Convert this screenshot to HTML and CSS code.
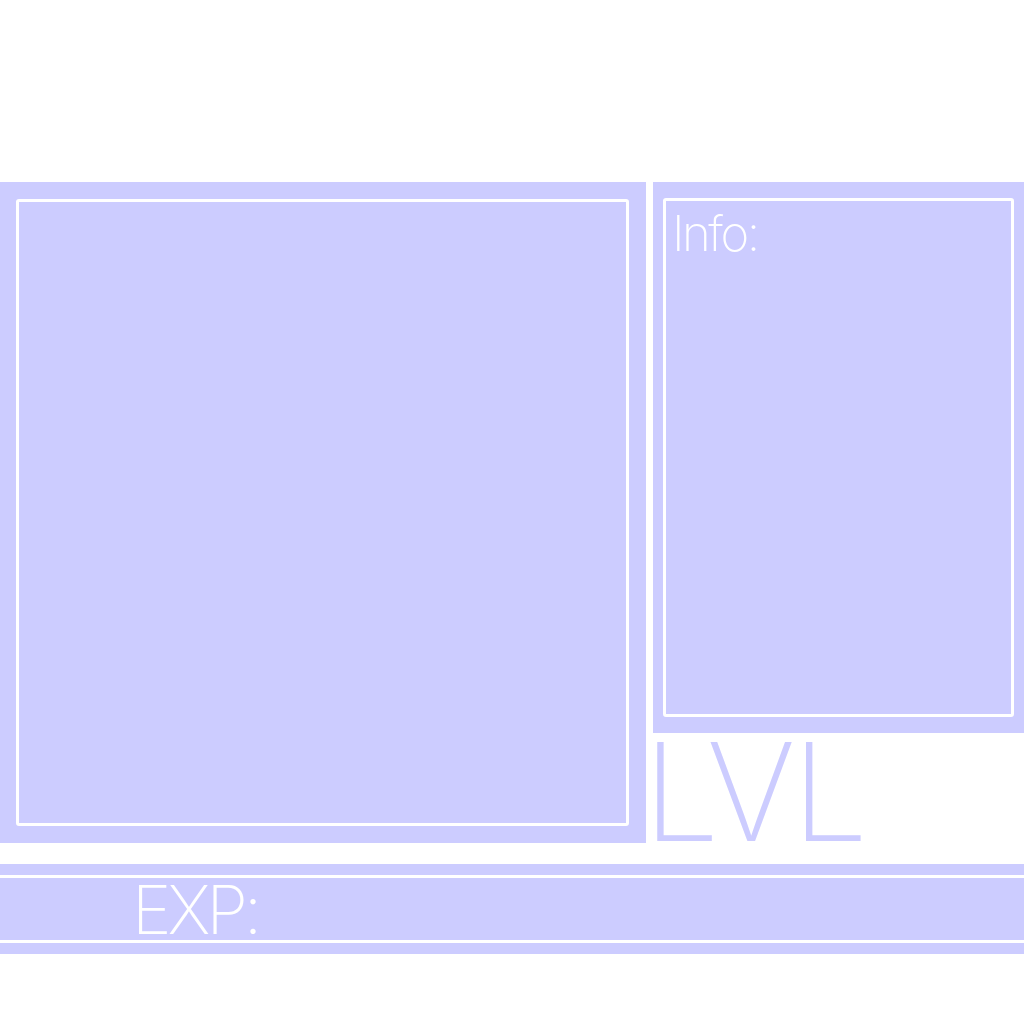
FILE: index.html
```html
<!DOCTYPE html>
<html>
<head>
<meta charset="utf-8">
<link rel="stylesheet" href="styles.css">
</head>
<body>
<div class="page">
  <div class="main-row">
    <section class="panel panel-left">
      <div class="frame frame-left"></div>
    </section>
    <div class="side">
      <section class="panel panel-right">
        <div class="frame frame-right">
          <div class="info-label">Info:</div>
        </div>
      </section>
      <div class="lvl">LVL</div>
    </div>
  </div>
  <section class="exp-bar">
    <div class="exp-inner">
      <span class="exp-label">EXP:</span>
    </div>
  </section>
</div>
</body>
</html>
```
FILE: styles.css
```css
html, body {
  margin: 0;
  padding: 0;
  background: #ffffff;
}
.page {
  width: 1024px;
  height: 1024px;
  padding-top: 182px;
  box-sizing: border-box;
  font-family: "Inter", "Lato", sans-serif;
  font-weight: 200;
}
.main-row {
  display: flex;
  gap: 7px;
  align-items: flex-start;
}
.panel {
  background: #ccccff;
  box-sizing: border-box;
}
.panel-left {
  width: 646px;
  height: 661px;
  padding: 17px 17px 17px 16px;
}
.frame {
  border: 3px solid #ffffff;
  border-radius: 3px;
  box-sizing: border-box;
  height: 100%;
}
.side {
  flex: 1;
  display: flex;
  flex-direction: column;
}
.panel-right {
  height: 551px;
  padding: 16px 10px 16px 10px;
}
.frame-right {
  padding: 0 6px;
}
.info-label {
  color: #ffffff;
  font-size: 49px;
  line-height: 1;
  margin-top: 8px;
  letter-spacing: -2.5px;
}
.lvl {
  color: #ccccff;
  font-size: 136px;
  line-height: 110px;
  height: 110px;
  padding-top: 4px;
  letter-spacing: -4px;
  margin-left: -10px;
}
.exp-bar {
  margin-top: 17px;
  height: 90px;
  background: #ccccff;
  padding: 11px 0;
  box-sizing: border-box;
}
.exp-inner {
  height: 100%;
  border-top: 3px solid #ffffff;
  border-bottom: 3px solid #ffffff;
  box-sizing: border-box;
  padding-left: 132px;
  display: flex;
  align-items: center;
}
.exp-label {
  color: #ffffff;
  font-size: 67px;
  line-height: 1;
  letter-spacing: -4px;
}
```
